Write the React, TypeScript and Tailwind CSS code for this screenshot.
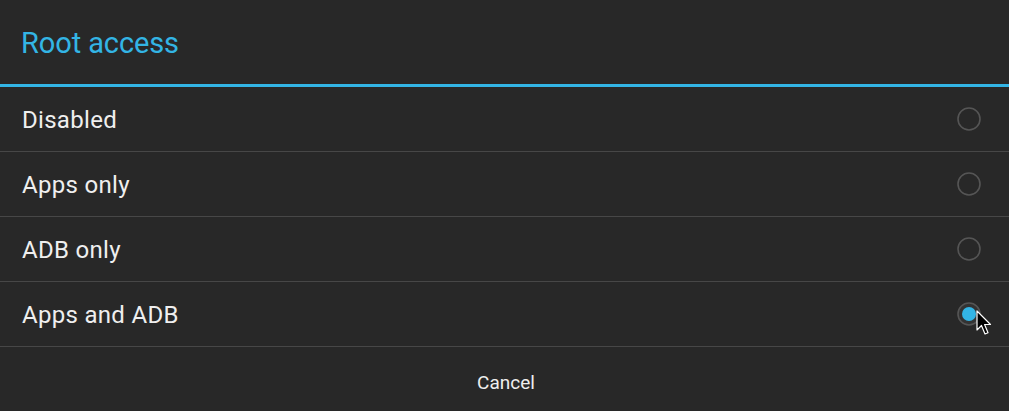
import React from "react"

const OPTIONS = ["Disabled", "Apps only", "ADB only", "Apps and ADB"]
const SELECTED = 3

const Radio = ({ checked }: { checked: boolean }) => (
    <svg width="26" height="26" viewBox="0 0 26 26">
        <circle
            cx="13"
            cy="13"
            r="11"
            fill={checked ? "#333333" : "none"}
            stroke="#555555"
            strokeWidth="1.6"
        />
        {checked && <circle cx="13" cy="13" r="7" fill="#33b5e5" />}
    </svg>
)

// mouse pointer drawn over the selected radio
const Cursor = () => (
    <svg width="16" height="26" viewBox="0 0 16 26">
        <path
            d="M1 1 L1 20 L5.5 15.5 L9 24 L12 22.8 L8.6 14.5 L14.5 14.5 Z"
            fill="#000"
            stroke="#fff"
            strokeWidth="1.2"
            strokeLinejoin="round"
        />
    </svg>
)

export default function App() {
    return (
        <div
            className="w-[1009px] h-[411px] bg-[#282828] flex flex-col overflow-hidden"
            style={{ fontFamily: "Roboto, 'Noto Sans', sans-serif" }}
        >
            {/* Title */}
            <div className="h-[84px] flex items-center px-[21px] pt-[3px]">
                <h1 className="text-[29px] text-[#33b5e5] leading-none tracking-[-0.1px]">
                    Root access
                </h1>
            </div>
            <div className="h-[3px] bg-[#33b5e5]" />

            {/* Options */}
            <div className="flex flex-col">
                {OPTIONS.map((label, i) => (
                    <div
                        key={label}
                        className="h-[65px] flex items-center justify-between pl-[22px] pr-[27px] border-b border-[#474747] relative"
                    >
                        <span className="text-[24px] text-[#efefef] leading-none pt-[2px] tracking-[0.3px]">
                            {label}
                        </span>
                        <Radio checked={i === SELECTED} />
                        {i === SELECTED && (
                            <div className="absolute left-[976px] top-[28px]">
                                <Cursor />
                            </div>
                        )}
                    </div>
                ))}
            </div>

            {/* Cancel */}
            <div className="flex-1 flex items-center justify-center pt-[6px] pl-[3px]">
                <span className="text-[19px] text-[#eeeeee] leading-none">Cancel</span>
            </div>
        </div>
    )
}
